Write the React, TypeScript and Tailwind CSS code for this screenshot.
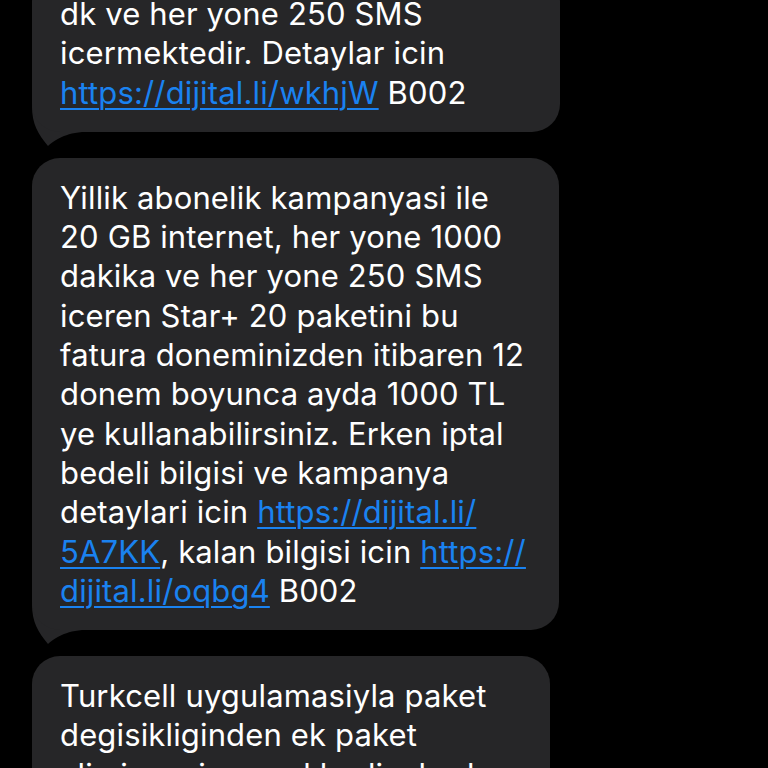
import React from "react";

const Tail = () => (
  <svg
    className="absolute left-0 bottom-[-14px]"
    width="50"
    height="46"
    viewBox="0 0 50 46"
  >
    <path d="M0 0 L0 6 C0 24 6 34 16 46 C22 41 30 34 50 32 L50 0 Z" fill="#262628" />
  </svg>
);

const L = ({ children }: { children: React.ReactNode }) => (
  <span className="text-[#1a82f0] underline decoration-[2px] underline-offset-[4px]">{children}</span>
);

const Bubble = ({
  children,
  width,
  tail,
  extra,
}: {
  children: React.ReactNode;
  width: string;
  tail?: boolean;
  extra?: string;
}) => (
  <div className={`relative ${width} ${extra ?? ""}`}>
    <div className="relative z-10 rounded-[28px] bg-[#262628] px-[28px] py-[20px] text-[31px] leading-[39.3px] tracking-[0.15px] text-white">
      {children}
    </div>
    {tail && <Tail />}
  </div>
);

export default function App() {
  return (
    <div
      className="h-[768px] w-[768px] overflow-hidden bg-black pl-[32px]"
      style={{ fontFamily: "Inter, 'Noto Sans', sans-serif" }}
    >
      <div className="flex flex-col gap-[26px]">
        <Bubble width="w-[528px]" tail extra="mt-[-26px]">
          dk ve her yone 250 SMS
          <br />
          icermektedir. Detaylar icin
          <br />
          <L>https://dijital.li/wkhjW</L> B002
        </Bubble>
        <Bubble width="w-[527px]" tail>
          Yillik abonelik kampanyasi ile
          <br />
          20 GB internet, her yone 1000
          <br />
          dakika ve her yone 250 SMS
          <br />
          iceren Star+ 20 paketini bu
          <br />
          fatura doneminizden itibaren 12
          <br />
          donem boyunca ayda 1000 TL
          <br />
          ye kullanabilirsiniz. Erken iptal
          <br />
          bedeli bilgisi ve kampanya
          <br />
          detaylari icin <L>https://dijital.li/</L>
          <br />
          <L>5A7KK</L>, kalan bilgisi icin <L>https://</L>
          <br />
          <L>dijital.li/oqbg4</L> B002
        </Bubble>
        <Bubble width="w-[518px]">
          Turkcell uygulamasiyla paket
          <br />
          degisikliginden ek paket
          <br />
          alimina, size ozel hediyelerden
          <br />
          birini secebilirsiniz.
        </Bubble>
      </div>
    </div>
  );
}
